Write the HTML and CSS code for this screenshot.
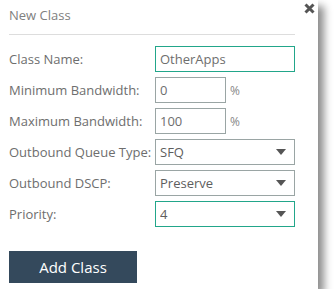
FILE: index.html
```html
<!DOCTYPE html>
<html lang="en">
<head>
    <meta charset="UTF-8">
    <meta name="viewport" content="width=device-width, initial-scale=1.0">
    <title>New Class</title>
    <link rel="stylesheet" href="styles.css">
</head>
<body>
    <div class="dialog">
        <a class="close" href="#" title="Close">
            <svg width="11" height="11" viewBox="0 0 11 11">
                <path d="M1.5 1.5 L9.5 9.5 M9.5 1.5 L1.5 9.5" stroke="#555" stroke-width="3"/>
            </svg>
        </a>
        <div class="title">New Class</div>
        <form class="class-form">
            <label for="className">Class Name:</label>
            <div class="field">
                <input type="text" id="className" class="wide active" value="OtherApps">
            </div>

            <label for="minBw">Minimum Bandwidth:</label>
            <div class="field">
                <input type="text" id="minBw" class="narrow" value="0">
                <span class="unit">%</span>
            </div>

            <label for="maxBw">Maximum Bandwidth:</label>
            <div class="field">
                <input type="text" id="maxBw" class="narrow" value="100">
                <span class="unit">%</span>
            </div>

            <label for="queueType">Outbound Queue Type:</label>
            <div class="field">
                <div class="select-wrap">
                    <select id="queueType">
                        <option>SFQ</option>
                        <option>FIFO</option>
                    </select>
                </div>
            </div>

            <label for="dscp">Outbound DSCP:</label>
            <div class="field">
                <div class="select-wrap">
                    <select id="dscp">
                        <option>Preserve</option>
                    </select>
                </div>
            </div>

            <label for="priority">Priority:</label>
            <div class="field">
                <div class="select-wrap">
                    <select id="priority" class="active">
                        <option>1</option>
                        <option>2</option>
                        <option>3</option>
                        <option selected>4</option>
                    </select>
                </div>
            </div>

            <button type="submit">Add Class</button>
        </form>
    </div>
</body>
</html>
```

FILE: styles.css
```css
body {
    margin: 0;
    background-color: white;
    font-family: "Open Sans", sans-serif;
}
.dialog {
    position: relative;
    width: 318px;
    height: 289px;
    background-color: white;
    box-shadow: 6px 6px 8px rgba(0,0,0,0.45);
    box-sizing: border-box;
    padding: 0 23px 0 9px;
}
.close {
    position: absolute;
    top: 3px;
    right: 3px;
    display: block;
    width: 11px;
    height: 11px;
}
.close svg {
    display: block;
}
.title {
    height: 35px;
    box-sizing: border-box;
    padding-top: 6px;
    font-size: 13px;
    color: #808080;
    border-bottom: 1px solid #ddd;
}
.class-form {
    display: grid;
    grid-template-columns: 146px 140px;
    row-gap: 5px;
    margin-top: 11px;
}
label {
    font-size: 13px;
    color: #6e6e6e;
    line-height: 26px;
}
.field {
    display: flex;
    align-items: center;
    height: 26px;
}
input, select {
    height: 26px;
    box-sizing: border-box;
    border: 1px solid #9aa5a4;
    border-radius: 0;
    padding: 0 0 0 4px;
    font-family: "Open Sans", sans-serif;
    font-size: 13px;
    color: #6e6e6e;
    background-color: white;
    outline: none;
}
input.wide {
    width: 140px;
}
input.narrow {
    width: 71px;
}
.active {
    border-color: #22a68a;
}
.unit {
    margin-left: 4px;
    font-size: 12px;
    color: #888;
}
.select-wrap {
    position: relative;
    width: 140px;
}
.select-wrap select {
    width: 100%;
    -webkit-appearance: none;
    appearance: none;
    color: #5e5e5e;
}
.select-wrap::after {
    content: "";
    position: absolute;
    right: 9px;
    top: 10px;
    border-left: 5px solid transparent;
    border-right: 5px solid transparent;
    border-top: 6px solid #555;
    pointer-events: none;
}
button {
    grid-column: 1 / 3;
    margin-top: 19px;
    width: 128px;
    height: 32px;
    background-color: #34495c;
    color: white;
    border: none;
    border-radius: 0;
    font-family: "Open Sans", sans-serif;
    font-size: 15px;
    cursor: pointer;
}
button:hover {
    background-color: #2c3e50;
}
```
